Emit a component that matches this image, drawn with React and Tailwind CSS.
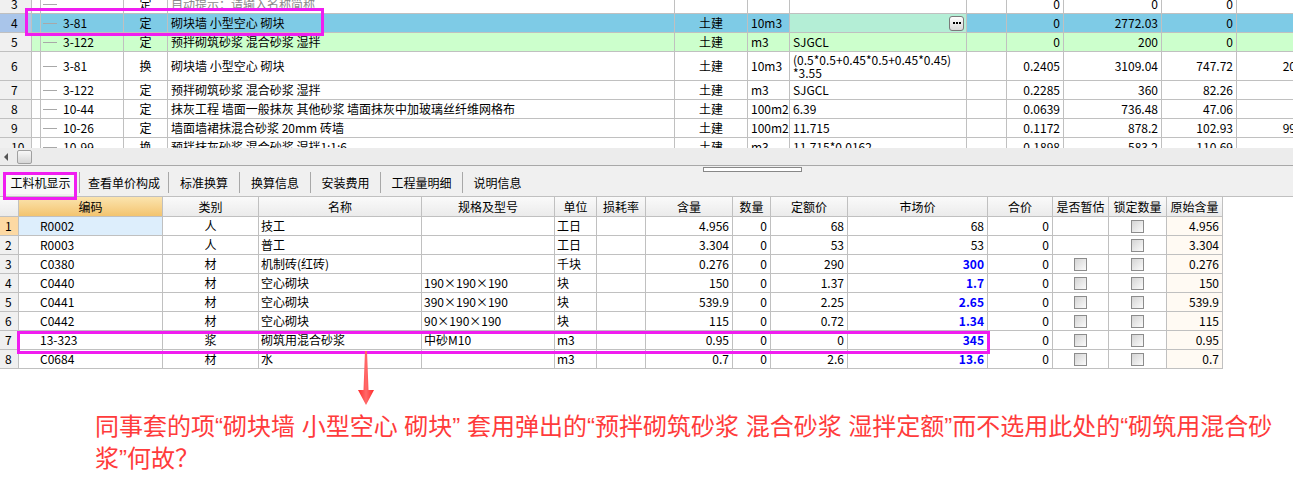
const line = 'border-r border-b border-[#c0c0c0] shrink-0';

const topRows = [
  { n: '3', h: 'h-[19px]', code: '', type: '定', name: '自动提示：请输入名称简称', nameCls: 'text-[#8a8a8a]', prof: '', unit: '', expr: '', v: ['0', '0', '0', ''] },
  { n: '4', h: 'h-[19px]', bg: 'bg-[#7ecbe6]', numBg: 'bg-[#a9c5ea]', code: '3-81', type: '定', name: '砌块墙 小型空心 砌块', prof: '土建', unit: '10m3', expr: '', exprBg: 'bg-[#b4eed6]', btn: true, v: ['0', '2772.03', '0', ''] },
  { n: '5', h: 'h-[19px]', bg: 'bg-[#ccffcc]', code: '3-122', type: '定', name: '预拌砌筑砂浆 混合砂浆 湿拌', prof: '土建', unit: 'm3', expr: 'SJGCL', v: ['0', '200', '0', ''] },
  { n: '6', h: 'h-[29px]', code: '3-81', type: '换', name: '砌块墙 小型空心 砌块', prof: '土建', unit: '10m3', expr: ['(0.5*0.5+0.45*0.5+0.45*0.45)', '*3.55'], v: ['0.2405', '3109.04', '747.72', '2048.53'] },
  { n: '7', h: 'h-[19px]', code: '3-122', type: '定', name: '预拌砌筑砂浆 混合砂浆 湿拌', prof: '土建', unit: 'm3', expr: 'SJGCL', v: ['0.2285', '360', '82.26', ''] },
  { n: '8', h: 'h-[19px]', code: '10-44', type: '定', name: '抹灰工程 墙面一般抹灰 其他砂浆 墙面抹灰中加玻璃丝纤维网格布', prof: '土建', unit: '100m2', expr: '6.39', v: ['0.0639', '736.48', '47.06', ''] },
  { n: '9', h: 'h-[19px]', code: '10-26', type: '定', name: '墙面墙裙抹混合砂浆 20mm 砖墙', prof: '土建', unit: '100m2', expr: '11.715', v: ['0.1172', '878.2', '102.93', '9987.12'] },
  { n: '10', h: 'h-[19px]', code: '10-99', type: '换', name: '预拌抹灰砂浆 混合砂浆 湿拌1:1:6', prof: '土建', unit: 'm3', expr: '11.715*0.0162', v: ['0.1898', '583.2', '110.69', ''] },
];

const valW = ['w-[57px]', 'w-[98px]', 'w-[75px]', 'w-[93px]'];

const tabs = [
  { t: '查看单价构成', w: 'w-[89px]' },
  { t: '标准换算', w: 'w-[71px]' },
  { t: '换算信息', w: 'w-[71px]' },
  { t: '安装费用', w: 'w-[70px]' },
  { t: '工程量明细', w: 'w-[82px]' },
  { t: '说明信息', w: 'w-[70px]' },
];

// bottom grid columns
const cols = [
  { t: '', w: 'w-[19px]' },
  { t: '编码', w: 'w-[144px]', hd: 'from-[#fbe4ae] to-[#f3c46e]' },
  { t: '类别', w: 'w-[96px]' },
  { t: '名称', w: 'w-[163px]' },
  { t: '规格及型号', w: 'w-[133px]' },
  { t: '单位', w: 'w-[42px]' },
  { t: '损耗率', w: 'w-[49px]' },
  { t: '含量', w: 'w-[87px]' },
  { t: '数量', w: 'w-[38px]' },
  { t: '定额价', w: 'w-[77px]' },
  { t: '市场价', w: 'w-[140px]' },
  { t: '合价', w: 'w-[65px]' },
  { t: '是否暂估', w: 'w-[56px]' },
  { t: '锁定数量', w: 'w-[58px]' },
  { t: '原始含量', w: 'w-[56px]' },
];

const items = [
  ['1', 'R0002', '人', '技工', '', '工日', '4.956', '0', '68', '68', false, false],
  ['2', 'R0003', '人', '普工', '', '工日', '3.304', '0', '53', '53', false, false],
  ['3', 'C0380', '材', '机制砖(红砖)', '', '千块', '0.276', '0', '290', '300', true, true],
  ['4', 'C0440', '材', '空心砌块', '190×190×190', '块', '150', '0', '1.37', '1.7', true, true],
  ['5', 'C0441', '材', '空心砌块', '390×190×190', '块', '539.9', '0', '2.25', '2.65', true, true],
  ['6', 'C0442', '材', '空心砌块', '90×190×190', '块', '115', '0', '0.72', '1.34', true, true],
  ['7', '13-323', '浆', '砌筑用混合砂浆', '中砂M10', 'm3', '0.95', '0', '0', '345', true, true],
  ['8', 'C0684', '材', '水', '', 'm3', '0.7', '0', '2.6', '13.6', true, true],
];

const Check = () => (
  <span className="w-[13px] h-[13px] border border-[#8c8c8c] bg-linear-to-br from-[#d4d4d4] to-[#fbfbfb]" />
);

const TopRow = ({ r }) => (
  <div className={`flex ${r.h} ${r.bg ?? ''}`}>
    <div className={`${line} w-[32px] flex items-center pl-[11px] ${r.numBg ?? 'bg-[#f0f0f0]'}`}>{r.n}</div>
    <div className={`${line} w-[9px]`} />
    <div className={`${line} w-[83px] flex items-center overflow-hidden whitespace-nowrap`}>
      <span className="ml-[2px] mr-[6px] w-[14px] h-px bg-[#a8a8a8]" />
      <span>{r.code}</span>
    </div>
    <div className={`${line} w-[44px] flex items-center justify-center`}>{r.type}</div>
    <div className={`${line} w-[507px] flex items-center pl-[3px] overflow-hidden whitespace-nowrap ${r.nameCls ?? ''}`}>{r.name}</div>
    <div className={`${line} w-[73px] flex items-center justify-center`}>{r.prof}</div>
    <div className={`${line} w-[42px] flex items-center pl-[3px]`}>{r.unit}</div>
    <div className={`${line} w-[177px] flex items-center pl-[3px] pr-[2px] overflow-hidden whitespace-nowrap ${r.exprBg ?? ''}`}>
      {Array.isArray(r.expr) ? (
        <div className="flex flex-col">
          {r.expr.map((e) => <div key={e} className="h-[13px] leading-[13px]">{e}</div>)}
        </div>
      ) : (
        <span className="flex-1">{r.expr}</span>
      )}
      {r.btn && (
        <span className="ml-auto w-[15px] h-[15px] rounded-[3px] border border-[#7a7a7a] bg-linear-to-b from-[#ffffff] to-[#d9d9d9] flex items-center justify-center gap-[1px]">
          <span className="w-[2px] h-[2px] bg-black" />
          <span className="w-[2px] h-[2px] bg-black" />
          <span className="w-[2px] h-[2px] bg-black" />
        </span>
      )}
    </div>
    <div className={`${line} w-[40px]`} />
    {r.v.map((v, i) => (
      <div key={i} className={`${line} ${valW[i]} flex items-center justify-end pr-[3px] whitespace-nowrap`}>{v}</div>
    ))}
  </div>
);

export default function App() {
  return (
    <div className="relative w-[1293px] h-[489px] overflow-hidden bg-white text-[12px] leading-none text-black font-['Noto_Sans_CJK_SC',sans-serif]">
      {/* upper grid */}
      <div className="h-[148px] overflow-hidden">
        <div className="-mt-[5px] w-[1335px]">
          {topRows.map((r) => <TopRow key={r.n} r={r} />)}
        </div>
      </div>

      {/* horizontal scrollbar */}
      <div className="h-[18px] bg-[#ececec] border-b border-[#a8a8a8] flex items-center">
        <span className="ml-[4px] w-0 h-0 border-y-[4px] border-y-transparent border-r-[4px] border-r-[#555]" />
        <span className="ml-[9px] w-[15px] h-[14px] rounded-[2px] border border-[#a0a0a0] bg-linear-to-b from-[#f8f8f8] to-[#d6d6d6]" />
      </div>

      {/* tab strip */}
      <div className="relative h-[31px] bg-[#f0f0f0] border-b border-[#c0c0c0] flex items-end pb-[2px]">
        <div className="absolute left-[703px] top-[1px] w-[99px] h-[5px] border border-[#888] bg-white" />
        <div className="w-[79px] h-[23px] flex items-center">
          <div className="ml-[4px] w-[72px] h-[22px] bg-[#f8f8f8] border-l border-[#404040] flex items-center justify-center">工料机显示</div>
        </div>
        {tabs.map((t) => (
          <div key={t.t} className={`${t.w} h-[21px] mb-[1px] border-l border-[#a8a8a8] flex items-center justify-center`}>{t.t}</div>
        ))}
      </div>

      {/* lower grid */}
      <div className="w-[1223px]">
        <div className="flex h-[20px]">
          {cols.map((c, i) => (
            <div key={i} className={`${line} ${c.w} flex items-center justify-center bg-linear-to-b ${c.hd ?? 'from-[#fafafa] to-[#ebebeb]'}`}>{c.t}</div>
          ))}
        </div>
        {items.map((r) => (
          <div key={r[0]} className="flex h-[19px]">
            <div className={`${line} w-[19px] flex items-center pl-[5px] ${r[0] === '1' ? 'bg-[#fdd9a3]' : 'bg-[#f0f0f0]'}`}>{r[0]}</div>
            <div className={`${line} w-[144px] flex items-center pl-[21px] ${r[0] === '1' ? 'bg-[#ddeefc]' : ''}`}>{r[1]}</div>
            <div className={`${line} w-[96px] flex items-center justify-center`}>{r[2]}</div>
            <div className={`${line} w-[163px] flex items-center pl-[2px]`}>{r[3]}</div>
            <div className={`${line} w-[133px] flex items-center pl-[2px] whitespace-nowrap`}>{r[4]}</div>
            <div className={`${line} w-[42px] flex items-center pl-[2px]`}>{r[5]}</div>
            <div className={`${line} w-[49px]`} />
            <div className={`${line} w-[87px] flex items-center justify-end pr-[3px]`}>{r[6]}</div>
            <div className={`${line} w-[38px] flex items-center justify-end pr-[3px]`}>{r[7]}</div>
            <div className={`${line} w-[77px] flex items-center justify-end pr-[3px]`}>{r[8]}</div>
            <div className={`${line} w-[140px] flex items-center justify-end pr-[3px] ${r[10] ? 'text-[#0000ff] font-bold' : ''}`}>{r[9]}</div>
            <div className={`${line} w-[65px] flex items-center justify-end pr-[3px]`}>0</div>
            <div className={`${line} w-[56px] flex items-center justify-center`}>{r[11] && <Check />}</div>
            <div className={`${line} w-[58px] flex items-center justify-center`}><Check /></div>
            <div className={`${line} w-[56px] flex items-center justify-end pr-[3px] bg-[#fffaf3]`}>{r[6]}</div>
          </div>
        ))}
      </div>

      {/* question */}
      <div className="pl-[95px] pt-[42px] text-[24px] leading-[32px] text-[#ff3b3b] whitespace-nowrap font-['Liberation_Sans','Noto_Sans_CJK_SC',sans-serif]">
        <div>同事套的项“砌块墙 小型空心 砌块” 套用弹出的“预拌砌筑砂浆 混合砂浆 湿拌定额”而不选用此处的“砌筑用混合砂</div>
        <div>浆”何故？</div>
      </div>

      {/* annotations */}
      <div className="absolute left-[25px] top-[8px] w-[299px] h-[28px] border-[3px] border-[#f01df0]" />
      <div className="absolute left-[3px] top-[172px] w-[74px] h-[28px] border-[3px] border-[#f01df0]" />
      <div className="absolute left-[17px] top-[331px] w-[973px] h-[23px] border-[3px] border-[#f01df0]" />
      <svg className="absolute left-[357px] top-[351px]" width="18" height="55" viewBox="0 0 18 55">
        <defs>
          <linearGradient id="ar" x1="0" x2="1" y1="0" y2="0">
            <stop offset="0" stopColor="#ff2a2a" />
            <stop offset="0.5" stopColor="#ff6a6a" />
            <stop offset="1" stopColor="#ff2a2a" />
          </linearGradient>
        </defs>
        <polygon points="8,0 10,0 11.5,39 17,39 9,54 1,39 6.5,39" fill="url(#ar)" />
      </svg>
    </div>
  );
}
